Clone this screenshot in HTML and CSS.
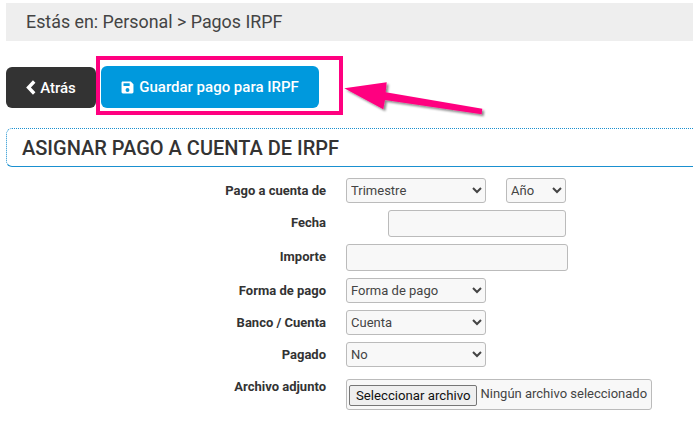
FILE: index.html
```html
<!DOCTYPE html>
<html lang="es">
<head>
    <meta charset="UTF-8">
    <meta name="viewport" content="width=device-width, initial-scale=1.0">
    <title>Pagos IRPF</title>
    <link rel="stylesheet" href="styles.css">
</head>
<body>
    <div class="breadcrumb">Estás en: Personal &gt; Pagos IRPF</div>

    <div class="toolbar">
        <button class="btn btn-dark" type="button">
            <svg class="icon-back" viewBox="0 0 10 15"><path d="M8.200 1.500 2.500 7.500l5.700 6" fill="none" stroke="#fff" stroke-width="3.400"/></svg>
            Atrás
        </button>
        <div class="highlight">
            <button class="btn btn-blue" type="button">
                <svg class="icon-save" viewBox="0 0 12 12"><path fill="#fff" fill-rule="evenodd" d="M1.300 .5H9L11.500 3v7.200c0 .7-.6 1.300-1.300 1.300H1.800C1.100 11.500 .5 10.900 .5 10.200V1.800C.5 1.100 .9 .5 1.300 .5ZM2.300 2v2.600H8V2ZM6 6.500a1.800 1.800 0 1 0 0 3.600a1.800 1.800 0 0 0 0-3.600Z"/></svg>
                Guardar pago para IRPF
            </button>
        </div>
        <svg class="arrow" viewBox="0 0 150 60">
            <defs>
                <filter id="arrow-shadow" x="-10%" y="-20%" width="120%" height="150%">
                    <feDropShadow dx="2" dy="2" stdDeviation="1.200" flood-color="#000" flood-opacity="0.45"/>
                </filter>
            </defs>
            <path fill="#ff0080" filter="url(#arrow-shadow)" d="M4.300 18.300 46.700 12.300 45.700 22.300 142.300 38.700 141.700 44.300 45 30 43.300 39.300Z"/>
        </svg>
    </div>

    <h2 class="section-title">ASIGNAR PAGO A CUENTA DE IRPF</h2>

    <form class="form">
        <div class="row row-select">
            <label>Pago a cuenta de</label>
            <div class="field">
                <select class="control select-wide"><option>Trimestre</option></select>
                <select class="control select-year"><option>Año</option></select>
            </div>
        </div>
        <div class="row row-input">
            <label>Fecha</label>
            <div class="field"><input class="control input-date" type="text"></div>
        </div>
        <div class="row row-input">
            <label>Importe</label>
            <div class="field"><input class="control input-wide" type="text"></div>
        </div>
        <div class="row row-select">
            <label>Forma de pago</label>
            <div class="field"><select class="control select-wide"><option>Forma de pago</option></select></div>
        </div>
        <div class="row row-select">
            <label>Banco / Cuenta</label>
            <div class="field"><select class="control select-wide"><option>Cuenta</option></select></div>
        </div>
        <div class="row row-select">
            <label>Pagado</label>
            <div class="field"><select class="control select-wide"><option>No</option></select></div>
        </div>
        <div class="row row-file">
            <label>Archivo adjunto</label>
            <div class="field">
                <div class="file-box">
                    <button class="file-btn" type="button">Seleccionar archivo</button>
                    <span class="file-name">Ningún archivo seleccionado</span>
                </div>
            </div>
        </div>
    </form>
</body>
</html>
```

FILE: styles.css
```css
body {
    margin: 0;
    padding: 3px 0 0 6px;
    background: #fff;
    color: #333;
    font-family: Roboto, sans-serif;
    overflow: hidden;
}
.breadcrumb {
    height: 38px;
    line-height: 38px;
    padding-left: 20px;
    background: #eee;
    font-size: 17.850px;
    color: #444;
}
.toolbar {
    position: relative;
    display: flex;
    align-items: flex-start;
    height: 87px;
}
.btn {
    border: none;
    color: #fff;
    font-family: Roboto, sans-serif;
    font-size: 15px;
    font-weight: 500;
    display: flex;
    align-items: center;
    justify-content: center;
    cursor: pointer;
}
.btn-dark {
    width: 90px;
    height: 41px;
    margin-top: 26px;
    border-radius: 6px;
    background: #333;
}
.btn-blue {
    width: 218px;
    height: 42px;
    border-radius: 6px;
    background: #0099dd;
}
.highlight {
    margin-top: 15px;
    width: 247px;
    height: 59px;
    box-sizing: border-box;
    border: 4px solid #ff0080;
    padding: 6px 0 0 1px;
}
.icon-back {
    width: 10px;
    height: 15px;
    margin-right: 4px;
}
.icon-save {
    width: 13px;
    height: 13px;
    margin-right: 5px;
}
.arrow {
    position: absolute;
    left: 334px;
    top: 29px;
    width: 150px;
    height: 60px;
}
.section-title {
    box-sizing: border-box;
    height: 39px;
    margin: 0;
    padding-left: 15px;
    line-height: 38px;
    font-size: 20px;
    font-weight: 500;
    color: #333;
    border: 1px dotted #1a90d0;
    border-bottom: 1px solid #1a90d0;
    border-right: none;
    border-radius: 6px 0 0 6px;
}
.form {
    margin-top: 11px;
}
.row {
    display: flex;
    align-items: flex-start;
    gap: 20px;
}
.row label {
    width: 320px;
    flex: none;
    text-align: right;
    font-size: 13px;
    font-weight: 700;
    color: #333;
    padding-top: 5px;
}
.field {
    display: flex;
    gap: 20px;
    justify-content: flex-start;
}
.row-select {
    height: 32px;
}
.row-input {
    height: 34px;
}
.row-file {
    height: 40px;
    margin-top: 5px;
}
.row-file label {
    padding-top: 0;
}
.control {
    box-sizing: border-box;
    margin: 0;
    border: 1px solid #bbb;
    border-radius: 3px;
    background-color: #f8f8f8;
    font-family: Roboto, sans-serif;
    font-size: 13px;
    color: #444;
}
select.control {
    height: 25px;
}
input.control {
    height: 27px;
}
.select-wide {
    width: 140px;
}
.select-year {
    width: 60px;
}
.input-date {
    width: 178px;
    margin-left: 42px;
}
.input-wide {
    width: 222px;
}
.file-box {
    box-sizing: border-box;
    display: flex;
    align-items: flex-start;
    gap: 3px;
    width: 306px;
    height: 31px;
    padding: 4px 2px;
    border: 1px solid #bbb;
    border-radius: 3px;
    background: #f8f8f8;
    font-size: 13px;
}
.file-btn {
    box-sizing: border-box;
    height: 21px;
    padding: 0 6px;
    margin-top: 1px;
    border: 1px solid #767676;
    border-radius: 2px;
    background: #efefef;
    color: #111;
    font-family: Roboto, sans-serif;
    font-size: 13.200px;
    white-space: nowrap;
}
.file-name {
    color: #444;
    white-space: nowrap;
    line-height: 18px;
    margin-top: 1px;
}
```
